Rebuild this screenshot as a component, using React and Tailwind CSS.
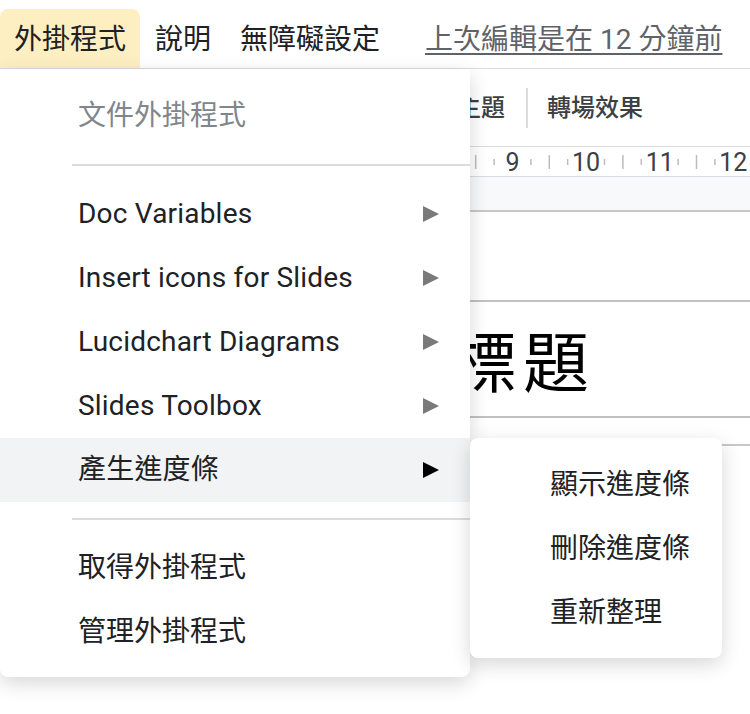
import React from 'react'

const menuItems = [
  { label: 'Doc Variables', sub: true },
  { label: 'Insert icons for Slides', sub: true },
  { label: 'Lucidchart Diagrams', sub: true },
  { label: 'Slides Toolbox', sub: true },
  { label: '產生進度條', sub: true, active: true },
]

const subItems = ['顯示進度條', '刪除進度條', '重新整理']

const Arrow = ({ dark }) => (
  <svg width="18" height="18" viewBox="0 0 18 18" className="shrink-0">
    <polygon points="1,1 17,9 1,17" fill={dark ? '#000000' : '#7a7a7a'} />
  </svg>
)

const Ruler = () => {
  const ticks = []
  for (let k = -28; k <= 13; k++) {
    const x = 512.5 + k * 18.4
    const mod = ((k % 4) + 4) % 4
    if (mod === 0) continue
    if (mod === 2) ticks.push(<line key={k} x1={x} x2={x} y1="154" y2="168" stroke="#b8bcc0" strokeWidth="1.5" />)
    else ticks.push(<line key={k} x1={x} x2={x} y1="158" y2="164" stroke="#b8bcc0" strokeWidth="1.5" />)
  }
  const nums = [9, 10, 11, 12]
  return (
    <svg width="750" height="29" viewBox="0 146 750 29" className="block">
      {ticks}
      {nums.map((n, i) => (
        <text key={n} x={512.5 + i * 73.6} y="170" textAnchor="middle" fontSize="25" fill="#3c4043" fontFamily="Roboto, sans-serif">
          {n}
        </text>
      ))}
    </svg>
  )
}

export default function App() {
  return (
    <div className="relative h-[714px] w-[750px] overflow-hidden bg-white font-[Roboto,'Noto_Sans_CJK_TC',sans-serif]">
      {/* menu bar */}
      <div className="flex h-[69px] items-end gap-px border-b border-[#dadce0] text-[28px] text-[#202124]">
        <div className="flex h-[59px] items-center rounded-t-lg bg-[#feefc3] px-[14px] pt-[3px]">外掛程式</div>
        <div className="flex h-[59px] items-center px-[14px] pt-[3px]">說明</div>
        <div className="flex h-[59px] items-center px-[14px] pt-[3px]">無障礙設定</div>
        <div className="ml-[30px] flex h-[59px] items-center pt-[3px] text-[28px] text-[#5f6368] underline decoration-[#5f6368] underline-offset-4">
          上次編輯是在 12 分鐘前
        </div>
      </div>

      {/* toolbar */}
      <div className="flex h-[77px] items-center pl-[457px] text-[24px] font-medium text-[#3c4043]">
        <span>主題</span>
        <div className="ml-[21px] h-[40px] w-[2px] bg-[#dadce0]" />
        <span className="ml-[19px]">轉場效果</span>
      </div>

      {/* ruler */}
      <div className="border-y border-[#dadce0]">
        <Ruler />
      </div>

      <div className="h-[35px] border-b-2 border-[#c7c7c7] bg-[#f8f9fa]" />
      <div className="h-[90px] border-b-2 border-[#c0c0c0]" />
      <div className="flex h-[116px] items-center border-b-2 border-[#c0c0c0] pl-[451px] pt-[12px] text-[66px] leading-none tracking-[6px] text-black">
        標題
      </div>
      <div className="h-[28px] border-b-2 border-[#c7c7c7]" />

      {/* add-ons menu */}
      <div className="absolute left-0 top-[69px] w-[470px] rounded-b-lg bg-white pb-[13px] pt-[15px] text-[28px] text-[#202124] shadow-[0_6px_20px_rgba(0,0,0,0.16)]">
        <div className="flex h-16 items-center pl-[78px] text-[#80868b]">文件外掛程式</div>
        <div className="py-4 pl-[72px]">
          <div className="h-[2px] bg-[#dadce0]" />
        </div>
        {menuItems.map((item) => (
          <div
            key={item.label}
            className={`flex h-16 items-center justify-between pl-[78px] pr-[30px] ${item.active ? 'bg-[#f1f3f4]' : ''}`}
          >
            <span className="tracking-[0.2px]">{item.label}</span>
            {item.sub && <Arrow dark={item.active} />}
          </div>
        ))}
        <div className="pb-4 pl-[72px] pt-[16px]">
          <div className="h-[2px] bg-[#dadce0]" />
        </div>
        <div className="flex h-16 items-center pl-[78px]">取得外掛程式</div>
        <div className="flex h-16 items-center pl-[78px]">管理外掛程式</div>
      </div>

      {/* submenu */}
      <div className="absolute left-[470px] top-[438px] w-[252px] rounded-lg bg-white pb-[13px] pt-[15px] text-[28px] text-[#202124] shadow-[0_6px_20px_rgba(0,0,0,0.16)]">
        {subItems.map((s) => (
          <div key={s} className="flex h-16 items-center pl-[80px]">
            {s}
          </div>
        ))}
      </div>
    </div>
  )
}
